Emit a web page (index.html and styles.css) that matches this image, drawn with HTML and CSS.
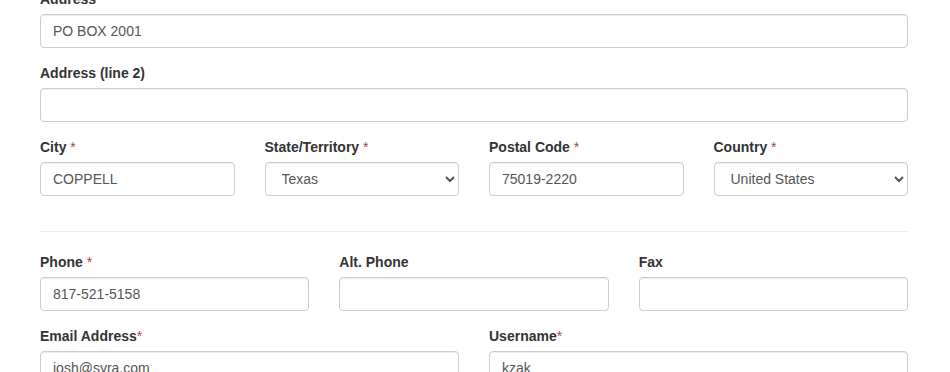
FILE: index.html
```html
<html>
<head>
	<title>Account</title>
	<link rel="stylesheet" href="styles.css">
</head>
<body>
	<form class="form">
		<div class="group">
			<label>Address</label>
			<input type="text" class="control" value="PO BOX 2001" />
		</div>
		<div class="group">
			<label>Address (line 2)</label>
			<input type="text" class="control" value="" />
		</div>
		<div class="row four">
			<div class="group">
				<label>City <span class="req">*</span></label>
				<input type="text" class="control" value="COPPELL" />
			</div>
			<div class="group">
				<label>State/Territory <span class="req">*</span></label>
				<select class="control">
					<option>Texas</option>
				</select>
			</div>
			<div class="group">
				<label>Postal Code <span class="req">*</span></label>
				<input type="text" class="control" value="75019-2220" />
			</div>
			<div class="group">
				<label>Country <span class="req">*</span></label>
				<select class="control">
					<option>United States</option>
				</select>
			</div>
		</div>

		<hr />

		<div class="row three">
			<div class="group">
				<label>Phone <span class="req">*</span></label>
				<input type="text" class="control" value="817-521-5158" />
			</div>
			<div class="group">
				<label>Alt. Phone</label>
				<input type="text" class="control" value="" />
			</div>
			<div class="group">
				<label>Fax</label>
				<input type="text" class="control" value="" />
			</div>
		</div>
		<div class="row two">
			<div class="group">
				<label>Email Address<span class="req">*</span></label>
				<input type="text" class="control" value="josh@syra.com" />
			</div>
			<div class="group">
				<label>Username<span class="req">*</span></label>
				<input type="text" class="control" value="kzak" />
			</div>
		</div>
	</form>
</body>
</html>
```

FILE: styles.css
```css
body{
	margin:0;
	background-color:#fff;
	font-family:"Liberation Sans", Arial, sans-serif;
	font-size:14px;
	line-height:20px;
	color:#333;
}
.form{
	width:868px;
	margin:-11px 0 0 40px;
}
.group{
	margin-bottom:15px;
}
label{
	display:block;
	font-weight:bold;
	margin-bottom:5px;
}
.req{
	color:#a94442;
	font-weight:normal;
}
.control{
	display:block;
	box-sizing:border-box;
	width:100%;
	height:34px;
	padding:6px 12px;
	font-family:inherit;
	font-size:14px;
	line-height:20px;
	color:#555;
	background-color:#fff;
	border:1px solid #ccc;
	border-radius:4px;
	box-shadow:inset 0 1px 1px rgba(0,0,0,.075);
}
.row{
	display:grid;
	column-gap:30px;
}
.four{
	grid-template-columns:repeat(4, 1fr);
}
.three{
	grid-template-columns:repeat(3, 1fr);
}
.two{
	grid-template-columns:repeat(2, 1fr);
}
hr{
	margin:20px 0;
	border:0;
	border-top:1px solid #eee;
}
```
